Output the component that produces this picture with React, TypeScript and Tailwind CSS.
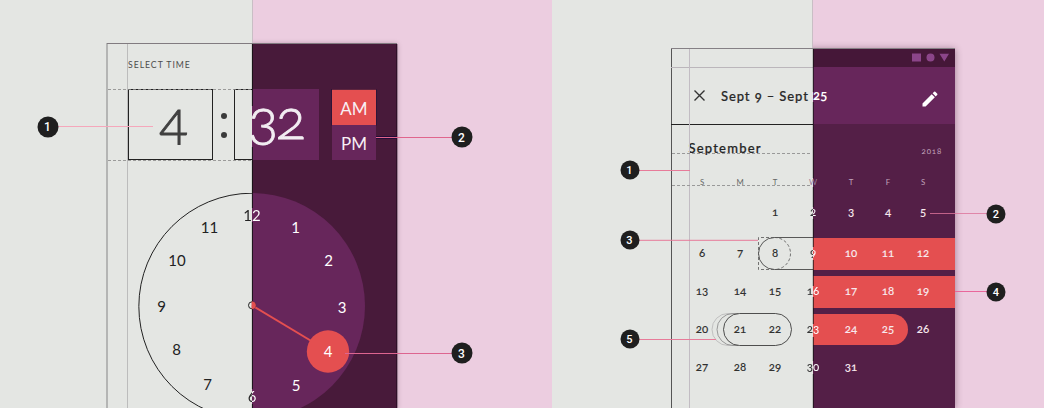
import React from "react";

const FONT = "font-[Lato,'Open_Sans',sans-serif]";

function Badge({ n, className }: { n: number; className: string }) {
  return (
    <span
      className={`absolute flex -translate-x-1/2 -translate-y-1/2 items-center justify-center rounded-full bg-[#1f1f1f] font-[Roboto,sans-serif] font-medium leading-none text-white ${className}`}
    >
      {n}
    </span>
  );
}

const CLOCK: [number, string][] = [
  [12, "left-[145px] top-[22px] bg-[linear-gradient(90deg,#222_50%,#fff_50%)] bg-clip-text text-transparent"],
  [1, "left-[188.5px] top-[34px] text-white"],
  [2, "left-[221.5px] top-[66.5px] text-white"],
  [3, "left-[235px] top-[113.5px] text-white"],
  [5, "left-[189px] top-[191.5px] text-white"],
  [6, "left-[145px] top-[203px] bg-[linear-gradient(90deg,#222_50%,#fff_50%)] bg-clip-text text-transparent"],
  [7, "left-[100.5px] top-[191px] text-[#222]"],
  [8, "left-[69.5px] top-[155.5px] text-[#222]"],
  [9, "left-[54.5px] top-[112.5px] text-[#222]"],
  [10, "left-[70px] top-[67px] text-[#222]"],
  [11, "left-[102.5px] top-[34px] text-[#222]"],
];

function TimePicker() {
  return (
    <section className="relative h-full overflow-hidden bg-[linear-gradient(90deg,#e4e6e3_252px,#eccde0_252px)] pl-[107px] pt-[43px]">
      <div className="h-[365px] w-[290px] bg-[linear-gradient(90deg,#e4e6e3_145px,#481a3a_145px)] shadow-[0_1px_5px_rgba(60,20,50,0.35)] [clip-path:polygon(0_0,146px_0,146px_-8px,300px_-8px,300px_100%,0_100%)]">
        <div className="flex h-[46px] items-center pl-[21px] pb-[2px] text-[8.7px] tracking-[0.95px] text-[#4d4d4d]">
          SELECT TIME
        </div>
        <div className="flex h-[71px] pl-[21px]">
          <div className="flex w-[85px] items-center justify-center border border-[#222] pl-[6px] text-[53px] font-light leading-none text-[#404040] oldstyle-nums [-webkit-text-stroke:0.8px_#404040]">
            <span className="-mt-[12px]">4</span>
          </div>
          <div className="flex w-[21px] flex-col items-center gap-[12.5px] pl-[1px] pt-[23.5px]">
            <span className="size-[6.5px] rounded-full bg-[#3b3b3b]" />
            <span className="size-[6.5px] rounded-full bg-[#3b3b3b]" />
          </div>
          <div className="w-[18px] border border-r-0 border-[#222]" />
          <div className="flex w-[67px] items-center bg-[#67265b] text-[56px] font-light leading-none tracking-[-2.5px] text-[#f2edf2] oldstyle-nums [-webkit-text-stroke:0.8px_#f2edf2]">
            <span className="-ml-[4px] -mt-[13px]">32</span>
          </div>
          <div className="ml-[13px] w-[44px] text-[17px] leading-none text-[#f8eff5]">
            <div className="flex h-[36px] items-center justify-center bg-[#e44f50] pt-[2px]">AM</div>
            <div className="flex h-[35px] items-center justify-center bg-[#67265b] pt-[2px]">PM</div>
          </div>
        </div>
        <div className="relative h-[248px] pt-[33px]">
          <svg className="block h-[215px] w-[290px]" viewBox="0 0 290 215" fill="none">
            <path d="M145 0a112.75 112.75 0 0 1 0 226z" fill="#67265b" />
            <path d="M145 .2a113.2 113.2 0 0 0 0 226.4" stroke="#222" strokeWidth="1" />
            <path d="M145 112.5L221 158" stroke="#e44f50" strokeWidth="2" />
            <circle cx="221" cy="158.5" r="21.2" fill="#e44f50" />
          </svg>
          <div className="absolute left-0 top-[33px] text-[15px] leading-none">
            {CLOCK.map(([n, c]) => (
              <span key={n} className={`absolute -translate-x-1/2 -translate-y-1/2 ${c}`}>{n}</span>
            ))}
            <span className="absolute left-[221px] top-[158px] -translate-x-1/2 -translate-y-1/2 text-white">4</span>
          </div>
        </div>
      </div>
      <svg className="absolute left-0 top-0 h-[408px] w-[552px]" viewBox="0 0 552 408" fill="none">
        <path d="M252.5 0V43" stroke="#c9bec5" />
        <path d="M107 408V43" stroke="#a5a5a5" strokeWidth="1.5" />
        <path d="M107 43.5H397" stroke="#817b80" />
        <path d="M127.5 44V408" stroke="#bcbcbc" />
        <path d="M252.4 44V106M252.4 147V208M252.4 222V389M252.4 404V408" stroke="#111" strokeWidth=".9" />
        <circle cx="252" cy="305.3" r="3.5" stroke="#222" />
        <path d="M252 301.8a3.5 3.5 0 0 1 0 7z" fill="#e44f50" stroke="#e44f50" strokeWidth=".8" />
        <path d="M396.8 44V408" stroke="#250d22" />
        <path d="M108 89.5H252M108 160.5H252" stroke="#888" strokeWidth=".8" strokeDasharray="3 2" />
        <path d="M331.5 89V125.5M331.5 89.5H376.5V125.5" stroke="#251236" strokeWidth=".7" />
        <path d="M57 126.5H153" stroke="#f5a7bb" />
        <path d="M376 137.5H397" stroke="#220c38" strokeWidth="3" />
        <path d="M376 137.5H452" stroke="#e0658d" />
        <path d="M345 353.5H452" stroke="#dd6590" />
      </svg>
      <Badge n={1} className="left-[47.5px] top-[126.5px] size-[21px] text-[12px]" />
      <Badge n={2} className="left-[461.5px] top-[137px] size-[21px] text-[12px]" />
      <Badge n={3} className="left-[461.5px] top-[353px] size-[21px] text-[12px]" />
    </section>
  );
}

const COLS = "grid grid-cols-[38px_38px_32px_44px_32px_42px_28px] pl-[12px]";
const WEEKS: (number | null)[][] = [
  [null, null, 1, 2, 3, 4, 5],
  [6, 7, 8, 9, 10, 11, 12],
  [13, 14, 15, 16, 17, 18, 19],
  [20, 21, 22, 23, 24, 25, 26],
  [27, 28, 29, 30, 31, null, null],
];
const BARS = [
  "",
  "bg-[linear-gradient(90deg,transparent_142px,#e44f50_142px)]",
  "bg-[linear-gradient(90deg,transparent_142px,#e44f50_142px)]",
  "",
  "",
];

function DatePicker() {
  return (
    <section className="relative h-full overflow-hidden bg-[linear-gradient(90deg,#e4e6e3_261px,#eccde0_261px)] pl-[119px] pt-[48px]">
      <div className="h-[360px] w-[284px] bg-[linear-gradient(90deg,#e4e6e3_142px,#541f47_142px)] shadow-[0_1px_7px_rgba(60,20,50,0.45)] [clip-path:polygon(0_0,142px_0,142px_-8px,294px_-8px,294px_100%,0_100%)]">
        <div className="flex h-[19px] items-center justify-end bg-[linear-gradient(90deg,#e4e6e3_142px,#451738_142px)] pr-[6px]">
          <svg className="h-[9px] w-[37px]" viewBox="0 0 37 9" fill="#8b4589">
            <path d="M0 .5h9v8H0zM27.5 .8H37L32.3 8.5z" />
            <circle cx="18.5" cy="4.5" r="4" />
          </svg>
        </div>
        <div className="flex h-[57px] items-center bg-[linear-gradient(90deg,#e4e6e3_142px,#67265b_142px)] pl-[23px]">
          <svg className="size-[11px]" viewBox="0 0 11 11" stroke="#333" strokeWidth="1.4">
            <path d="M.5 .5l10 10M10.5 .5l-10 10" />
          </svg>
          <h2 className="-mt-px ml-[16px] w-[92px] whitespace-pre pt-[2px] text-[13px] font-medium leading-none tracking-[0.9px] text-[#292929] oldstyle-nums [-webkit-text-stroke:0.2px_#292929]">Sept 9 – Sept</h2>
          <span className="text-[13px] font-bold leading-none tracking-[0.3px] text-white oldstyle-nums">25</span>
          <svg className="ml-auto mr-[15px] mt-[7px] size-[20px]" viewBox="0 0 24 24" fill="#fff">
            <path d="M3 17.25V21h3.75L17.81 9.94l-3.75-3.75L3 17.25zM20.71 7.04a1 1 0 0 0 0-1.41l-2.34-2.34a1 1 0 0 0-1.41 0l-1.83 1.83 3.75 3.75 1.83-1.83z" />
          </svg>
        </div>
        <div className="flex h-[50px] items-center justify-between pl-[17.5px] pr-[13px]">
          <h3 className="-mt-px text-[13px] font-medium leading-none tracking-[1.2px] text-[#252525] [-webkit-text-stroke:0.2px_#252525]">September</h3>
          <span className="mt-[3px] text-[8px] leading-none tracking-[0.8px] text-[#c0a3ba] oldstyle-nums">2018</span>
        </div>
        <div className={`${COLS} h-[18px] items-center text-center text-[7.8px] leading-none text-[#666]`}>
          {["S", "M", "T", "W", "T", "F", "S"].map((d, i) => (
            <span key={i} className={i > 3 ? "text-[#c0a3ba]" : i === 3 ? "text-[#98819a]" : ""}>{d}</span>
          ))}
        </div>
        <div className="flex flex-col gap-[6px] pt-[5px]">
          {WEEKS.map((week, w) => (
            <div
              key={w}
              className={`relative ${COLS} h-[32px] items-center justify-items-center text-[11.5px] font-medium leading-none text-[#303030] oldstyle-nums ${BARS[w]} ${w === 0 ? "mb-[3px]" : ""}`}
            >
              {w === 3 && <i className="absolute left-[142px] top-0 h-[31px] w-[95px] rounded-r-full bg-[#e44f50]" />}
              {week.map((d, i) => (
                <span
                  key={i}
                  className={`relative -top-[1px] [-webkit-text-stroke-width:0.1px] ${
                    i === 3
                      ? "bg-[linear-gradient(90deg,#333_50%,#fff_50%)] bg-clip-text text-transparent"
                      : i > 3
                        ? "text-[#f8e9ee]"
                        : ""
                  }`}
                >
                  {d}
                </span>
              ))}
            </div>
          ))}
        </div>
      </div>
      <svg className="absolute left-0 top-0 h-[408px] w-[492px]" viewBox="552 0 492 408" fill="none">
        <path d="M812.5 0V48" stroke="#c9bec5" />
        <path d="M671.5 408V48" stroke="#555" />
        <path d="M671 48.5H955" stroke="#858085" />
        <path d="M671 67.5H813" stroke="#bbb6bb" />
        <path d="M671 124.5H813" stroke="#222" />
        <path d="M689.5 49V408" stroke="#c2bcc3" />
        <path d="M813.3 49V92M813.3 102V178M813.3 187V207M813.3 219V247M813.3 260V286M813.3 297V324M813.3 337V361M813.3 374V408" stroke="#111" strokeWidth=".8" />
        <path d="M672 153.5H812M672 185.5H812" stroke="#999" strokeDasharray="3 2" />
        <path d="M813 237.5H774.5a16 16 0 0 0 0 32H813" stroke="#333" strokeWidth=".8" />
        <path d="M774.5 237.5a16 16 0 0 1 0 32M774 237.5H758.5V269.5H774" stroke="#555" strokeWidth=".8" strokeDasharray="3 2" />
        <path d="M734 313.5h-6a16 16 0 0 0 0 32h6" stroke="#c0c0c0" />
        <path d="M738 313.5h-5a16 16 0 0 0 0 32h5" stroke="#999" />
        <rect x="723.5" y="313.5" width="68" height="32" rx="16" stroke="#333" strokeWidth=".85" />
        <path d="M639 170.5H690M639 240.3H758M639 339.5H716" stroke="#e77b99" />
        <path d="M930 213.5H987" stroke="#dd749a" strokeWidth=".8" />
        <path d="M955 291.5H987" stroke="#e9679b" />
      </svg>
      <Badge n={1} className="left-[77.5px] top-[170px] size-[19px] text-[11px]" />
      <Badge n={2} className="left-[444px] top-[213.5px] size-[19px] text-[11px]" />
      <Badge n={3} className="left-[77.5px] top-[240px] size-[19px] text-[11px]" />
      <Badge n={4} className="left-[444px] top-[291.5px] size-[19px] text-[11px]" />
      <Badge n={5} className="left-[77.5px] top-[339px] size-[19px] text-[11px]" />
    </section>
  );
}

export default function App() {
  return (
    <main className={`grid h-[408px] w-[1044px] grid-cols-[552px_492px] overflow-hidden ${FONT}`}>
      <TimePicker />
      <DatePicker />
    </main>
  );
}
